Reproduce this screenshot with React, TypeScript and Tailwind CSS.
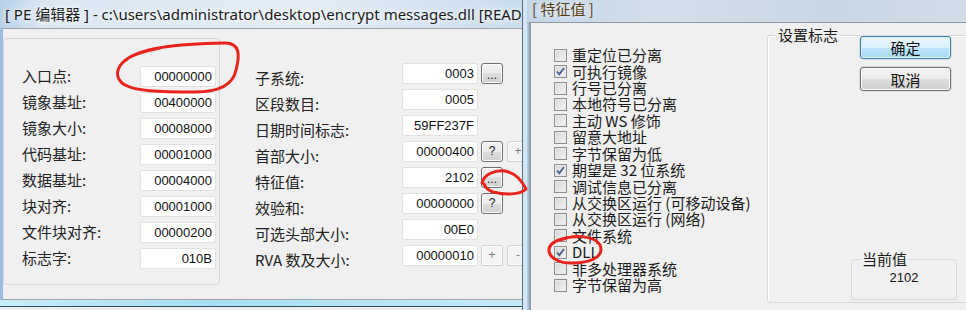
import React from "react";

const cjk = "font-['Noto_Sans_CJK_SC',sans-serif]";
const num = "font-['Liberation_Sans',sans-serif]";

const leftRows: [string, string][] = [
  ["入口点:", "00000000"],
  ["镜象基址:", "00400000"],
  ["镜象大小:", "00008000"],
  ["代码基址:", "00001000"],
  ["数据基址:", "00004000"],
  ["块对齐:", "00001000"],
  ["文件块对齐:", "00000200"],
  ["标志字:", "010B"],
];

type MidRow = { label: string; value: string; btns?: string[] };
const midRows: MidRow[] = [
  { label: "子系统:", value: "0003", btns: ["..."] },
  { label: "区段数目:", value: "0005" },
  { label: "日期时间标志:", value: "59FF237F" },
  { label: "首部大小:", value: "00000400", btns: ["?", "+"] },
  { label: "特征值:", value: "2102", btns: ["..."] },
  { label: "效验和:", value: "00000000", btns: ["?"] },
  { label: "可选头部大小:", value: "00E0" },
  { label: "RVA 数及大小:", value: "00000010", btns: ["+", "-"] },
];

const flags: [string, boolean][] = [
  ["重定位已分离", false],
  ["可执行镜像", true],
  ["行号已分离", false],
  ["本地符号已分离", false],
  ["主动 WS 修饰", false],
  ["留意大地址", false],
  ["字节保留为低", false],
  ["期望是 32 位系统", true],
  ["调试信息已分离", false],
  ["从交换区运行 (可移动设备)", false],
  ["从交换区运行 (网络)", false],
  ["文件系统", false],
  ["DLL", true],
  ["非多处理器系统", false],
  ["字节保留为高", false],
];

function Field({ value }: { value: string }) {
  return (
    <div
      className={`h-[21px] w-[76px] shrink-0 rounded-[2px] border border-[#e1e1e1] bg-white pr-[3px] text-right text-[13px] leading-[19px] text-[#111] ${num}`}
    >
      {value}
    </div>
  );
}

function SmallBtn({ label }: { label: string }) {
  const flat = label === "+" || label === "-";
  if (flat) {
    return (
      <div
        className={`ml-[3px] flex h-[21px] w-[22px] shrink-0 items-center justify-center rounded-[2px] border border-[#cfcfcf] bg-[#f3f3f3] text-[12px] leading-none text-[#7a7a7a] shadow-[inset_0_0_0_1px_#fbfbfb] ${num}`}
      >
        {label}
      </div>
    );
  }
  return (
    <div
      className={`ml-[3px] flex h-[21px] w-[22px] shrink-0 items-center justify-center rounded-[3px] border border-[#707070] bg-[linear-gradient(#f2f2f2,#ebebeb_50%,#dddddd_50%,#cfcfcf)] text-[12px] leading-none text-[#222] shadow-[inset_0_0_0_1px_#fcfcfc] ${num}`}
    >
      <span className={label === "..." ? "mt-[3px]" : ""}>{label}</span>
    </div>
  );
}

function Check() {
  return (
    <svg width="11" height="11" viewBox="0 0 11 11">
      <path d="M2 5.5 L4.3 8.3 L9 2" fill="none" stroke="#4b5d8f" strokeWidth="1.8" />
    </svg>
  );
}

function LeftWindow() {
  return (
    <div className="flex h-full w-[523px] shrink-0 flex-col border-r border-[#5d6d7c]">
      <div className="flex h-[28px] shrink-0 items-center overflow-hidden bg-[linear-gradient(to_right,#b6cfe8,#dbe7f3_8%,#e4edf6_60%,#cadcee)] pl-[5px]">
        <span
          className={`block whitespace-nowrap text-[15px] leading-[20px] text-[#1a1a1a] [text-shadow:0_0_8px_#fff,0_0_4px_#fff] font-['Noto_Sans','Noto_Sans_CJK_SC',sans-serif]`}
        >
          [ PE 编辑器 ] - c:\users\administrator\desktop\encrypt messages.dll [READ
        </span>
      </div>
      <div className="flex min-h-0 flex-1">
        <div className="w-[3px] shrink-0 bg-[#9cbde0]" />
        <div className="flex flex-1 items-start overflow-hidden border-t border-b border-[#9aa3ad] bg-[#f0f0f0]">
          <div className="mt-[9px] h-[247px] w-[217px] shrink-0 rounded-[3px] border border-[#d6d6d6] pt-[24px]">
            {leftRows.map(([l, v]) => (
              <div key={l} className="flex h-[26px] items-center justify-between pl-[18px] pr-[3px]">
                <span className={`block text-[15px] leading-[20px] text-[#222] ${cjk}`}>{l}</span>
                <Field value={v} />
              </div>
            ))}
          </div>
          <div className="ml-[35px] mt-[31px]">
            {midRows.map((r) => (
              <div key={r.label} className="flex h-[26px] items-center">
                <span className={`mt-[10px] block w-[147px] shrink-0 whitespace-nowrap text-[15px] leading-[20px] text-[#222] ${cjk}`}>
                  {r.label}
                </span>
                <Field value={r.value} />
                {r.btns?.map((b, i) => (
                  <div key={i} className={i > 0 ? "ml-[1px]" : ""}>
                    <SmallBtn label={b} />
                  </div>
                ))}
              </div>
            ))}
          </div>
        </div>
      </div>
      <div className="flex h-[10px] shrink-0 flex-col">
        <div className="h-[6px] bg-[linear-gradient(to_right,#c8eef8,#a6def3_40%,#c5ecf8)]" />
        <div className="h-[1px] bg-[#3d4b57]" />
        <div className="flex-1 bg-[#e9eff3]" />
      </div>
    </div>
  );
}

function RightWindow() {
  return (
    <div className="flex h-full min-w-0 flex-1 flex-col">
      <div className="flex h-[22px] shrink-0 items-start overflow-hidden bg-[linear-gradient(to_right,#c4d6e8,#d3dfea_30%,#c9d7e4_70%,#d1dde8)] pl-[5px] pt-[1px]">
        <span className={`block text-[15px] leading-[16px] text-[#5a3f16] [text-shadow:0_0_6px_#fff] ${cjk}`}>[ 特征值 ]</span>
      </div>
      <div className="flex min-h-0 flex-1">
        <div className="w-[3px] shrink-0 bg-[linear-gradient(to_right,#c2d3e3,#8d9baa)]" />
        <div className="flex flex-1 items-start overflow-hidden border-t border-l border-[#8a98a8] bg-[#f0f0f0]">
          <div className="w-[236px] shrink-0 pl-[23px] pt-[24px]">
            {flags.map(([t, c]) => (
              <div key={t} className="flex h-[16.43px] items-center">
                <div className="flex h-[13px] w-[13px] shrink-0 items-center justify-center border border-[#8f8f8f] bg-[linear-gradient(135deg,#d6d6d6,#f4f4f4)] shadow-[inset_0_0_0_1px_#e9e9e9]">
                  {c && <Check />}
                </div>
                <span className={`ml-[5px] block h-[16px] whitespace-nowrap text-[15px] leading-[16px] text-[#1b1b1b] ${cjk}`}>{t}</span>
              </div>
            ))}
          </div>
          <div className="mt-[12px] flex h-[268px] w-[230px] shrink-0 flex-col rounded-[3px] border border-[#d3dbe1] shadow-[inset_1px_1px_0_#fff]">
            <div className="flex">
              <div className="w-[92px] shrink-0">
                <span className={`-mt-[11px] ml-[8px] block w-fit bg-[#f0f0f0] px-[2px] text-[15px] leading-[20px] text-[#1b1b1b] ${cjk}`}>
                  设置标志
                </span>
              </div>
              <div className="flex flex-col">
                <div className="rounded-[4px] shadow-[0_0_0_1px_#d9dde0]">
                  <div
                    className={`flex h-[23px] w-[91px] items-center justify-center rounded-[3px] border border-[#3c7fb1] bg-[linear-gradient(#eaf6fd,#d9f0fc_50%,#bee6fd_50%,#a7d9f5)] text-[15px] leading-none text-[#111] shadow-[inset_0_0_0_1px_#ddf2fc] ${cjk}`}
                  >
                    确定
                  </div>
                </div>
                <div className="mt-[8px] rounded-[4px] shadow-[0_0_0_1px_#d9dde0]">
                  <div
                    className={`flex h-[24px] w-[91px] items-center justify-center rounded-[3px] border border-[#707070] bg-[linear-gradient(#f2f2f2,#ebebeb_50%,#dddddd_50%,#cfcfcf)] text-[15px] leading-none text-[#111] shadow-[inset_0_0_0_1px_#fcfcfc] ${cjk}`}
                  >
                    取消
                  </div>
                </div>
              </div>
            </div>
            <div className="flex-1" />
            <div className="mb-[2px] ml-[83px] flex h-[41px] w-[106px] flex-col rounded-[3px] border border-[#d3dbe1]">
              <span className={`-mt-[11px] ml-[9px] block self-start bg-[#f0f0f0] px-[1px] text-[15px] leading-[20px] text-[#1b1b1b] ${cjk}`}>
                当前值
              </span>
              <span className={`mt-[1px] block text-center text-[13px] leading-[16px] text-[#111] ${num}`}>2102</span>
            </div>
          </div>
        </div>
      </div>
    </div>
  );
}

export default function App() {
  return (
    <div className="relative flex h-[310px] w-[966px] overflow-hidden bg-[#c9dcee]">
      <LeftWindow />
      <div className="w-[4px] shrink-0 bg-[#d3e6f5]" />
      <RightWindow />
      <svg className="pointer-events-none absolute left-0 top-0" width="966" height="310" viewBox="0 0 966 310">
        <g fill="none" stroke="#e8231c" strokeWidth="3" strokeLinecap="round" strokeLinejoin="round">
          <path d="M126 60 C140 48 175 44 225 43 C240 43 240 55 236 70 C233 85 220 92 195 92 C165 92 130 92 121 82 C114 74 118 64 130 57 C140 52 150 50 160 48" />
          <path d="M482 183 C484 174 495 170 505 171 C515 173 522 181 526 189 C520 195 505 195 493 192 C488 190 485 187 484 184" />
          <path d="M560 240 C575 234 595 236 600 245 C604 255 595 262 575 263 C560 264 548 258 549 249 C550 243 556 240 566 238" />
        </g>
      </svg>
    </div>
  );
}
